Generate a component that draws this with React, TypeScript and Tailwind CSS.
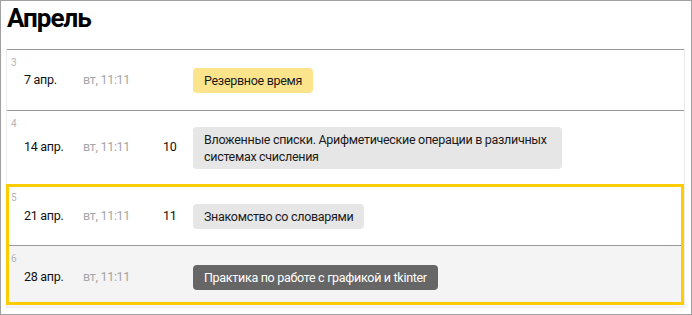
type Lesson = {
  idx: number;
  date: string;
  time: string;
  num?: string;
  title: string;
  tone: "reserve" | "plain" | "dark";
  rowClass: string;
  bg?: string;
};

const lessons: Lesson[] = [
  { idx: 3, date: "7 апр.", time: "вт, 11:11", title: "Резервное время", tone: "reserve", rowClass: "h-[60px]" },
  {
    idx: 4,
    date: "14 апр.",
    time: "вт, 11:11",
    num: "10",
    title: "Вложенные списки. Арифметические операции в различных системах счисления",
    tone: "plain",
    rowClass: "h-[73px]",
  },
  { idx: 5, date: "21 апр.", time: "вт, 11:11", num: "11", title: "Знакомство со словарями", tone: "plain", rowClass: "h-[60px] pt-[2px]" },
  {
    idx: 6,
    date: "28 апр.",
    time: "вт, 11:11",
    title: "Практика по работе с графикой и tkinter",
    tone: "dark",
    rowClass: "h-[61px] pt-[1px]",
    bg: "bg-[#f4f4f4]",
  },
];

const toneClass = {
  reserve: "bg-[#fce48c] text-[#1a1a1a]",
  plain: "bg-[#e6e6e6] text-[#1a1a1a]",
  dark: "bg-[#666666] text-white",
};

function LessonRow({ l }: { l: Lesson }) {
  return (
    <div className={`relative border-t border-[#9a9a9a] ${l.bg ?? "bg-white"}`}>
      <span className="absolute left-[4px] top-[7px] text-[10px] leading-[12px] text-[#b3b3b3]">{l.idx}</span>
      <div className={`flex items-center pl-[17px] text-[12.5px] tracking-[-0.3px] ${l.rowClass}`}>
        <span className="w-[59px] shrink-0 text-[#111]">{l.date}</span>
        <span className="w-[80px] shrink-0 text-[#a6a6a6]">{l.time}</span>
        <span className="w-[30px] shrink-0 text-[#111]">{l.num}</span>
        <span className={`max-w-[369px] rounded-[4px] px-[11px] py-[4px] leading-[17px] ${toneClass[l.tone]}`}>
          {l.title}
        </span>
      </div>
    </div>
  );
}

export default function App() {
  return (
    <div className="h-[315px] w-[692px] border border-[#a0a0a0] bg-white pl-[5px] pr-[6px] font-['Roboto',sans-serif]">
      <h1 className="pl-[1px] pt-[1px] text-[26px] font-bold leading-[32px] tracking-[-1px] text-black">Апрель</h1>
      <div className="relative mt-[15px] border-x border-b border-[#ececec]">
        {lessons.map((l) => (
          <LessonRow key={l.idx} l={l} />
        ))}
        {/* current week highlight */}
        <div className="pointer-events-none absolute left-[-1px] top-[135px] h-[121px] w-[678px] border-[3px] border-[#ffcc00]" />
      </div>
    </div>
  );
}
